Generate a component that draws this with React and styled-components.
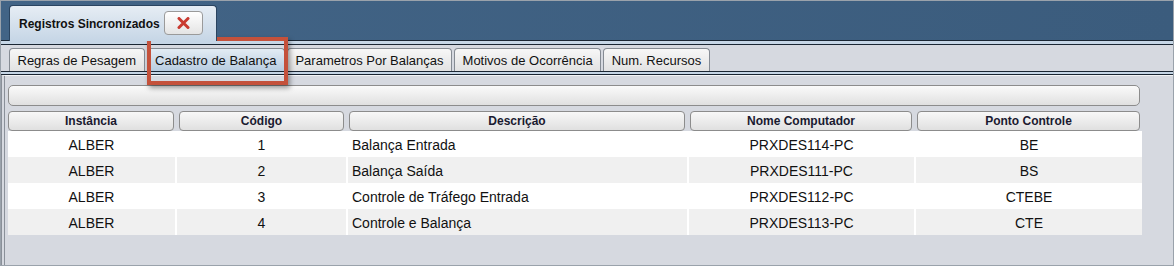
import React from 'react';
import styled, { createGlobalStyle } from 'styled-components';

const GlobalStyle = createGlobalStyle`
  body {
    margin: 0;
    font-family: "Liberation Sans", Arial, sans-serif;
    background: #fff;
  }
  * { box-sizing: border-box; }
`;

const Frame = styled.div`
  position: relative;
  width: 1174px;
  height: 266px;
  border: 1px solid #9aa2ab;
  display: flex;
  flex-direction: column;
  background: #d6d9e0;
  overflow: hidden;
`;

const TopBand = styled.div`
  height: 40px;
  display: flex;
  align-items: flex-end;
  padding-left: 8px;
  background: linear-gradient(90deg, #426486, #3b5c7d);
  border-bottom: 1px solid #1a2633;
`;

const OuterTab = styled.div`
  position: relative;
  z-index: 1;
  margin-bottom: -1px;
  width: 208px;
  height: 36px;
  display: flex;
  align-items: center;
  padding-left: 9px;
  gap: 4px;
  border: 1px solid #2a4460;
  border-bottom: none;
  border-radius: 4px 4px 0 0;
  background: linear-gradient(#e6edf4, #c6d6e6);
  font-size: 12px;
  font-weight: bold;
  color: #111;
`;

const CloseButton = styled.div`
  width: 39px;
  height: 24px;
  margin-top: -1px;
  display: flex;
  align-items: center;
  justify-content: center;
  border: 1px solid #9a9a9a;
  border-radius: 4px;
  background: linear-gradient(#ffffff, #e4e4e4);
`;

const Strip = styled.div`
  height: 4px;
  background: #c6d6e6;
  border-bottom: 1px solid #1a2633;
`;

const TabBar = styled.div`
  height: 26px;
  display: flex;
  align-items: flex-end;
  gap: 2px;
  padding-left: 8px;
`;

const Tab = styled.div`
  height: 23px;
  display: flex;
  align-items: center;
  padding: 0 7.5px;
  border: 1px solid #858b93;
  border-bottom: none;
  border-radius: 4px 4px 0 0;
  font-size: 13px;
  color: #111;
  background: ${p => (p.$active
    ? 'linear-gradient(#e3ecf4, #b8cce0)'
    : 'linear-gradient(#f7f7f7, #e2e2e2)')};
`;

const Separator = styled.div`
  height: 4px;
  background: #c6d6e6;
  border-top: 1px solid #1a2633;
  border-bottom: 1px solid #1a2633;
`;

const Body = styled.div`
  flex: 1;
  display: flex;
  flex-direction: column;
  padding: 9px 0 0 3px;
  border-top: 1px solid #f3f4f6;
  border-left: 4px double #8a9099;
`;

const FilterBar = styled.div`
  width: 1132px;
  height: 21px;
  border: 1px solid #8c8c8c;
  border-radius: 5px;
  background: linear-gradient(#fafafa, #e0e0e0);
`;

const HeaderRow = styled.div`
  margin-top: 5px;
  display: grid;
  grid-template-columns: 166px 165px 336px 222px 223px;
  column-gap: 5px;
  height: 20px;
`;

const HeaderCell = styled.div`
  display: flex;
  align-items: center;
  justify-content: center;
  border: 1px solid #8c8c8c;
  border-radius: 4px;
  background: linear-gradient(#f8f8f8, #e0e0e0);
  font-size: 12px;
  font-weight: bold;
  color: #1a1a30;
`;

const Table = styled.div`
  width: 1134px;
  background: #fff;
`;

const Row = styled.div`
  display: grid;
  grid-template-columns: 167px 169px 339px 225px 226px;
  column-gap: 2px;
  height: 26px;
`;

const Cell = styled.div`
  display: flex;
  align-items: center;
  justify-content: ${p => (p.$left ? 'flex-start' : 'center')};
  padding-left: ${p => (p.$left ? '4px' : '0')};
  padding-top: 1px;
  background: ${p => (p.$odd ? '#f0f0f0' : '#ffffff')};
  font-size: 14px;
  color: #111;
`;

const Highlight = styled.div`
  position: absolute;
  left: 146px;
  top: 36px;
  width: 141px;
  height: 48px;
  border: 4px solid #c4513b;
  box-shadow: 2px 3px 5px rgba(0, 0, 0, 0.4);
  pointer-events: none;
`;

const tabs = [
  'Regras de Pesagem',
  'Cadastro de Balança',
  'Parametros Por Balanças',
  'Motivos de Ocorrência',
  'Num. Recursos',
];

const columns = ['Instância', 'Código', 'Descrição', 'Nome Computador', 'Ponto Controle'];

const rows = [
  ['ALBER', '1', 'Balança Entrada', 'PRXDES114-PC', 'BE'],
  ['ALBER', '2', 'Balança Saída', 'PRXDES111-PC', 'BS'],
  ['ALBER', '3', 'Controle de Tráfego Entrada', 'PRXDES112-PC', 'CTEBE'],
  ['ALBER', '4', 'Controle e Balança', 'PRXDES113-PC', 'CTE'],
];

const CloseIcon = () => (
  <svg width="13" height="12" viewBox="0 0 13 12">
    <path d="M2 1.5 L11 10.5 M11 1.5 L2 10.5" stroke="#c93a30" strokeWidth="3" strokeLinecap="round" />
  </svg>
);

const App = () => {
  return (
    <>
      <GlobalStyle />
      <Frame>
        <TopBand>
          <OuterTab>
            Registros Sincronizados
            <CloseButton>
              <CloseIcon />
            </CloseButton>
          </OuterTab>
        </TopBand>
        <Strip />
        <TabBar>
          {tabs.map((t, i) => (
            <Tab key={t} $active={i === 1}>{t}</Tab>
          ))}
        </TabBar>
        <Separator />
        <Body>
          <FilterBar />
          <HeaderRow>
            {columns.map(c => (
              <HeaderCell key={c}>{c}</HeaderCell>
            ))}
          </HeaderRow>
          <Table>
            {rows.map((r, i) => (
              <Row key={i}>
                {r.map((v, j) => (
                  <Cell key={j} $odd={i % 2 === 1} $left={j === 2}>{v}</Cell>
                ))}
              </Row>
            ))}
          </Table>
        </Body>
        <Highlight />
      </Frame>
    </>
  );
};

export default App;
